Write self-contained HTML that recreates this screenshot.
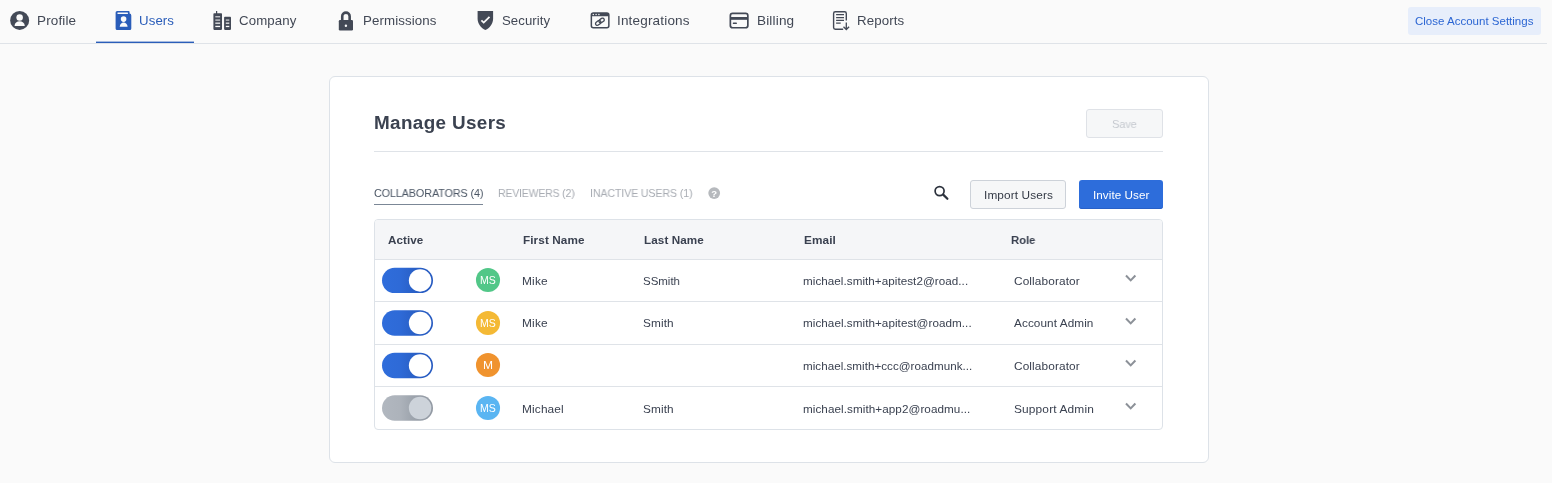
<!DOCTYPE html>
<html lang="en">
<head>
<meta charset="utf-8">
<title>Manage Users</title>
<style>
html,body{margin:0;padding:0}
body{width:1552px;height:483px;position:relative;overflow:hidden;background:#fafafa;font-family:"Liberation Sans",sans-serif;}
.t{position:absolute;white-space:nowrap;line-height:1;will-change:transform;transform-origin:0 0;}
.abs{position:absolute}
#nav{left:0;top:0;width:1547px;height:43px;border-bottom:1px solid #dfe3e8;background:#fafafa}
#navsel{left:96px;top:41px;width:98px;height:2px;background:linear-gradient(180deg,rgba(42,93,185,.4) 0,rgba(42,93,185,.4) 1px,#2a5db9 1px,#2a5db9 2px)}
#closebtn{left:1408px;top:7px;width:133px;height:28px;border-radius:3px;background:#e7eefb}
#card{left:329px;top:76px;width:878px;height:385px;border:1px solid #dde2e8;border-radius:6px;background:#fff}
#hr{left:374px;top:151px;width:789px;height:1px;background:#dfe3e8}
#save{left:1086px;top:109px;width:75px;height:27px;border:1px solid #dfe2e7;border-radius:3px;background:#f6f7f8}
#import{left:970px;top:180px;width:94px;height:27px;border:1px solid #cdd2d9;border-radius:3px;background:#f6f7f8}
#invite{left:1079px;top:180px;width:84px;height:29px;border-radius:3px;background:#2d6ddb;box-shadow:inset 0 -1px 0 #2760c8}
#tabsel{left:374px;top:204px;width:109px;height:1px;background:#7b8796}
#table{left:374px;top:219px;width:787px;height:209px;border:1px solid #dde2e8;border-radius:4px;background:#fff;overflow:hidden}
#thead{left:0;top:0;width:787px;height:39px;background:#f5f6f8}
.rl{left:0;width:787px;height:1px;background:#dfe3e8}
svg{position:absolute;left:0;top:0;overflow:visible;will-change:transform}
</style>
</head>
<body>
<div id="nav" class="abs"></div>
<div id="navsel" class="abs"></div>
<div id="closebtn" class="abs"></div>
<div id="card" class="abs"></div>
<div id="hr" class="abs"></div>
<div id="save" class="abs"></div>
<div id="import" class="abs"></div>
<div id="invite" class="abs"></div>
<div id="tabsel" class="abs"></div>
<div id="table" class="abs">
  <div id="thead" class="abs"></div>
  <div class="abs rl" style="top:39px"></div>
  <div class="abs rl" style="top:81px"></div>
  <div class="abs rl" style="top:124px"></div>
  <div class="abs rl" style="top:166px"></div>
</div>
<svg width="1552" height="483" viewBox="0 0 1552 483">
<defs>
<linearGradient id="gon" x1="0" x2="1" y1="0" y2="0"><stop offset="0" stop-color="#2f6ddb"/><stop offset="0.35" stop-color="#2e6ad7"/><stop offset="0.6" stop-color="#2a61c8"/><stop offset="1" stop-color="#2559c0"/></linearGradient>
<linearGradient id="goff" x1="0" x2="1" y1="0" y2="0"><stop offset="0" stop-color="#b1b7bf"/><stop offset="0.35" stop-color="#adb3bb"/><stop offset="0.62" stop-color="#9ca3ac"/><stop offset="1" stop-color="#9299a3"/></linearGradient>
</defs>
<!-- toggles -->
<rect x="382" y="267.70" width="51" height="25.4" rx="12.7" fill="url(#gon)"/><circle cx="420.1" cy="280.4" r="11.25" fill="#fff"/>
<rect x="382" y="310.25" width="51" height="25.4" rx="12.7" fill="url(#gon)"/><circle cx="420.1" cy="322.95" r="11.25" fill="#fff"/>
<rect x="382" y="352.75" width="51" height="25.4" rx="12.7" fill="url(#gon)"/><circle cx="420.1" cy="365.45" r="11.25" fill="#fff"/>
<rect x="382" y="395.30" width="51" height="25.4" rx="12.7" fill="url(#goff)"/><circle cx="420.1" cy="408.0" r="11.25" fill="#cdd3da"/>
<!-- avatars -->
<circle cx="488" cy="280" r="12.05" fill="#52c788"/>
<circle cx="488" cy="323" r="12.05" fill="#f4b935"/>
<circle cx="488" cy="365" r="12.05" fill="#f0932e"/>
<circle cx="488" cy="408" r="12.05" fill="#5ab5f2"/>
<!-- profile -->
<g>
<circle cx="19.65" cy="20.4" r="9.5" fill="#434956"/>
<circle cx="19.65" cy="17.5" r="3.25" fill="#fafafa"/>
<path d="M14.5 25.9 C14.7 22.9 17 21.3 19.6 21.3 C22.2 21.3 24.6 22.9 24.8 25.9 Z" fill="#fafafa"/>
</g>
<!-- users (book) -->
<g>
<path d="M117.2 10.9 H128.6 Q129.6 10.9 129.6 11.9 V13.6 Q131.3 13.8 131.3 15.4 V28.6 Q131.3 30.1 129.8 30.1 H117.2 Q115.6 30.1 115.6 28.5 V12.5 Q115.6 10.9 117.2 10.9 Z" fill="#2a5db9"/>
<rect x="117.4" y="12.6" width="10.6" height="1.3" rx="0.4" fill="#fafafa"/>
<circle cx="123.6" cy="19.1" r="2.8" fill="#fafafa"/>
<path d="M119.7 26.7 C119.8 24 121.6 22.4 123.6 22.4 C125.6 22.4 127.5 24 127.6 26.7 Z" fill="#fafafa"/>
</g>
<!-- company -->
<g fill="#434956">
<rect x="216" y="11" width="1.2" height="3"/>
<rect x="213.4" y="13.2" width="8.6" height="16.7" rx="0.8"/>
<rect x="224.1" y="16.7" width="6.9" height="13.2" rx="0.8"/>
</g>
<g fill="#fafafa">
<rect x="215.3" y="16.1" width="4.8" height="1.3" opacity="0.75"/>
<rect x="215.3" y="19.4" width="4.8" height="1.4" opacity="0.7"/>
<rect x="215.3" y="22.5" width="4.8" height="1.4" opacity="0.85"/>
<rect x="215.3" y="25.8" width="4.8" height="1.3"/>
<rect x="225.8" y="19.4" width="3.5" height="1.4" opacity="0.7"/>
<rect x="225.8" y="22.5" width="3.5" height="1.4" opacity="0.85"/>
<rect x="225.8" y="25.8" width="3.5" height="1.3"/>
</g>
<!-- lock -->
<g>
<path d="M342.25 21 V16.3 A3.7 3.7 0 0 1 349.65 16.3 V21" fill="none" stroke="#434956" stroke-width="2.6"/>
<rect x="338.8" y="20.1" width="14.2" height="10.3" rx="1.2" fill="#434956"/>
<circle cx="345.9" cy="25.7" r="1.2" fill="#fafafa"/>
</g>
<!-- shield -->
<g>
<path d="M477.6 10.9 H493.1 V18.5 C493.1 24 489.6 27.9 485.4 30.1 C481.1 27.9 477.6 24 477.6 18.5 Z" fill="#434956"/>
<path d="M481.4 20.4 L483.7 22.6 L489.5 16.8" fill="none" stroke="#fafafa" stroke-width="1.8"/>
</g>
<!-- integrations -->
<g>
<rect x="591.35" y="13.05" width="17.5" height="14.8" rx="2" fill="none" stroke="#434956" stroke-width="1.5"/>
<path d="M591.35 16.2 V14.6 Q591.35 13.05 593 13.05 H607.2 Q608.85 13.05 608.85 14.6 V16.2 Z" fill="#434956"/>
<circle cx="593.3" cy="14.5" r="0.7" fill="#fafafa"/><circle cx="596.1" cy="14.5" r="0.7" fill="#fafafa"/><circle cx="598.9" cy="14.5" r="0.7" fill="#fafafa"/>
<g transform="translate(599.9 21.7) rotate(-36)" fill="none" stroke="#434956" stroke-width="1.3">
<rect x="-5.0" y="-1.75" width="5.8" height="3.5" rx="1.75"/>
<rect x="-0.8" y="-1.75" width="5.8" height="3.5" rx="1.75"/>
</g>
</g>
<!-- billing -->
<g>
<rect x="730.35" y="13.35" width="17.5" height="14.4" rx="2.3" fill="none" stroke="#434956" stroke-width="1.7"/>
<rect x="730" y="17" width="18" height="2.8" fill="#434956"/>
<rect x="732.8" y="22.5" width="4.1" height="1.6" rx="0.6" fill="#434956"/>
</g>
<!-- reports -->
<g fill="none" stroke="#434956">
<path d="M846.3 20.6 V13.4 Q846.3 11.7 844.6 11.7 H835.3 Q833.6 11.7 833.6 13.4 V27.5 Q833.6 29.2 835.3 29.2 H843.2" stroke-width="1.4"/>
<path d="M846.3 22.4 V29.2 M843.5 26.8 L846.3 29.5 L849.1 26.8" stroke-width="1.3"/>
<path d="M836.1 14.7 H844 M836.1 17.6 H844 M836.1 20.3 H844 M836.1 23.2 H840.7" stroke-width="1.2"/>
</g>
<!-- help -->
<circle cx="714.2" cy="193.1" r="5.9" fill="#b6b9bd"/>
<text x="714.2" y="196.7" font-family="Liberation Sans, sans-serif" font-size="9.5" font-weight="700" fill="#fff" text-anchor="middle">?</text>
<!-- search -->
<g fill="none" stroke="#2c323d">
<circle cx="939.6" cy="191.1" r="4.5" stroke-width="1.7"/>
<path d="M943.2 194.6 L947.4 198.8" stroke-width="2.2" stroke-linecap="round"/>
</g>
<!-- chevrons -->
<g fill="none" stroke="#8c9198" stroke-width="2.05">
<path d="M1126 275.55 L1130.7 280.40 L1135.4 275.55"/>
<path d="M1126 318.55 L1130.7 323.40 L1135.4 318.55"/>
<path d="M1126 360.55 L1130.7 365.40 L1135.4 360.55"/>
<path d="M1126 403.55 L1130.7 408.40 L1135.4 403.55"/>
</g>
</svg>

<div class="t" style="left:36.80px;top:14.00px;font-size:13px;color:#424855;letter-spacing:0.138px;transform:translateY(0.00px) scaleX(1.0366)">Profile</div>
<div class="t" style="left:138.78px;top:14.00px;font-size:13px;color:#2a5db9;letter-spacing:0.098px;transform:translateY(0.00px) scaleX(1.0185)">Users</div>
<div class="t" style="left:238.96px;top:14.00px;font-size:13px;color:#424855;letter-spacing:0.111px;transform:translateY(0.00px) scaleX(1.0185)">Company</div>
<div class="t" style="left:362.61px;top:14.00px;font-size:13px;color:#424855;letter-spacing:0.105px;transform:translateY(0.00px) scaleX(1.0233)">Permissions</div>
<div class="t" style="left:502.37px;top:14.00px;font-size:13px;color:#424855;letter-spacing:0.061px;transform:translateY(0.00px) scaleX(1.0141)">Security</div>
<div class="t" style="left:617.06px;top:14.00px;font-size:13px;color:#424855;letter-spacing:0.160px;transform:translateY(0.00px) scaleX(1.0415)">Integrations</div>
<div class="t" style="left:756.79px;top:14.00px;font-size:13px;color:#424855;letter-spacing:0.150px;transform:translateY(0.00px) scaleX(1.0431)">Billing</div>
<div class="t" style="left:857.11px;top:14.00px;font-size:13px;color:#424855;letter-spacing:0.111px;transform:translateY(0.00px) scaleX(1.0232)">Reports</div>
<div class="t" style="left:1415.04px;top:16.27px;font-size:11.5px;color:#2c66d3;letter-spacing:0.003px;transform:translateY(0.00px) scaleX(1.0008)">Close Account Settings</div>
<div class="t" style="left:373.86px;top:113.76px;font-size:18px;font-weight:700;color:#3b4250;letter-spacing:0.336px;transform:translateY(0.45px) scaleX(1.0483)">Manage Users</div>
<div class="t" style="left:1112.02px;top:119.27px;font-size:11.5px;color:#c6cad0;letter-spacing:-0.191px;transform:translateY(0.00px) scaleX(0.9669)">Save</div>
<div class="t" style="left:373.75px;top:187.69px;font-size:11px;color:#4a5564;letter-spacing:-0.096px;transform:translateY(0.00px) scaleX(0.9799)">COLLABORATORS (4)</div>
<div class="t" style="left:498.46px;top:187.69px;font-size:11px;color:#a8acb3;letter-spacing:-0.202px;transform:translateY(0.00px) scaleX(0.9570)">REVIEWERS (2)</div>
<div class="t" style="left:589.93px;top:187.69px;font-size:11px;color:#a8acb3;letter-spacing:-0.136px;transform:translateY(0.00px) scaleX(0.9685)">INACTIVE USERS (1)</div>
<div class="t" style="left:983.91px;top:190.27px;font-size:11.5px;color:#343a46;letter-spacing:0.106px;transform:translateY(0.00px) scaleX(1.0279)">Import Users</div>
<div class="t" style="left:1093.12px;top:190.27px;font-size:11.5px;color:#ffffff;letter-spacing:0.056px;transform:translateY(0.00px) scaleX(1.0158)">Invite User</div>
<div class="t" style="left:387.68px;top:235.27px;font-size:11.5px;font-weight:700;color:#3a4150;letter-spacing:0.054px;transform:translateY(0.00px) scaleX(1.0122)">Active</div>
<div class="t" style="left:523.43px;top:235.27px;font-size:11.5px;font-weight:700;color:#3a4150;letter-spacing:0.087px;transform:translateY(0.00px) scaleX(1.0205)">First Name</div>
<div class="t" style="left:644.14px;top:235.27px;font-size:11.5px;font-weight:700;color:#3a4150;letter-spacing:0.079px;transform:translateY(0.00px) scaleX(1.0168)">Last Name</div>
<div class="t" style="left:803.83px;top:235.27px;font-size:11.5px;font-weight:700;color:#3a4150;letter-spacing:0.115px;transform:translateY(0.00px) scaleX(1.0242)">Email</div>
<div class="t" style="left:1010.96px;top:235.27px;font-size:11.5px;font-weight:700;color:#3a4150;letter-spacing:-0.088px;transform:translateY(0.00px) scaleX(0.9836)">Role</div>
<div class="t" style="left:521.93px;top:276.27px;font-size:11.5px;color:#3a4150;letter-spacing:0.166px;transform:translateY(0.00px) scaleX(1.0339)">Mike</div>
<div class="t" style="left:642.70px;top:276.27px;font-size:11.5px;color:#3a4150;letter-spacing:-0.017px;transform:translateY(0.00px) scaleX(0.9964)">SSmith</div>
<div class="t" style="left:803.34px;top:276.27px;font-size:11.5px;color:#3a4150;letter-spacing:0.048px;transform:translateY(0.00px) scaleX(1.0133)">michael.smith+apitest2@road...</div>
<div class="t" style="left:1013.52px;top:276.27px;font-size:11.5px;color:#3a4150;letter-spacing:0.107px;transform:translateY(0.00px) scaleX(1.0293)">Collaborator</div>
<div class="t" style="left:521.93px;top:318.27px;font-size:11.5px;color:#3a4150;letter-spacing:0.166px;transform:translateY(0.00px) scaleX(1.0339)">Mike</div>
<div class="t" style="left:642.69px;top:318.27px;font-size:11.5px;color:#3a4150;letter-spacing:0.115px;transform:translateY(0.00px) scaleX(1.0251)">Smith</div>
<div class="t" style="left:803.34px;top:318.27px;font-size:11.5px;color:#3a4150;letter-spacing:0.053px;transform:translateY(0.00px) scaleX(1.0142)">michael.smith+apitest@roadm...</div>
<div class="t" style="left:1014.20px;top:318.27px;font-size:11.5px;color:#3a4150;letter-spacing:0.087px;transform:translateY(0.00px) scaleX(1.0210)">Account Admin</div>
<div class="t" style="left:803.34px;top:361.27px;font-size:11.5px;color:#3a4150;letter-spacing:0.037px;transform:translateY(0.00px) scaleX(1.0094)">michael.smith+ccc@roadmunk...</div>
<div class="t" style="left:1013.52px;top:361.27px;font-size:11.5px;color:#3a4150;letter-spacing:0.107px;transform:translateY(0.00px) scaleX(1.0293)">Collaborator</div>
<div class="t" style="left:521.93px;top:404.27px;font-size:11.5px;color:#3a4150;letter-spacing:0.133px;transform:translateY(0.00px) scaleX(1.0326)">Michael</div>
<div class="t" style="left:642.69px;top:404.27px;font-size:11.5px;color:#3a4150;letter-spacing:0.115px;transform:translateY(0.00px) scaleX(1.0251)">Smith</div>
<div class="t" style="left:803.34px;top:404.27px;font-size:11.5px;color:#3a4150;letter-spacing:0.064px;transform:translateY(0.00px) scaleX(1.0164)">michael.smith+app2@roadmu...</div>
<div class="t" style="left:1013.58px;top:404.27px;font-size:11.5px;color:#3a4150;letter-spacing:0.139px;transform:translateY(0.00px) scaleX(1.0349)">Support Admin</div>
<div class="t" style="left:480.03px;top:275.11px;font-size:10.5px;color:#ffffff;letter-spacing:-0.030px;transform:translateY(0.00px) scaleX(0.9969)">MS</div>
<div class="t" style="left:480.03px;top:318.11px;font-size:10.5px;color:#ffffff;letter-spacing:-0.030px;transform:translateY(0.00px) scaleX(0.9969)">MS</div>
<div class="t" style="left:482.70px;top:360.11px;font-size:10.5px;color:#ffffff;letter-spacing:0.000px;transform:translateY(0.00px) scaleX(1.1457)">M</div>
<div class="t" style="left:480.03px;top:403.11px;font-size:10.5px;color:#ffffff;letter-spacing:-0.030px;transform:translateY(0.00px) scaleX(0.9969)">MS</div>
</body>
</html>
